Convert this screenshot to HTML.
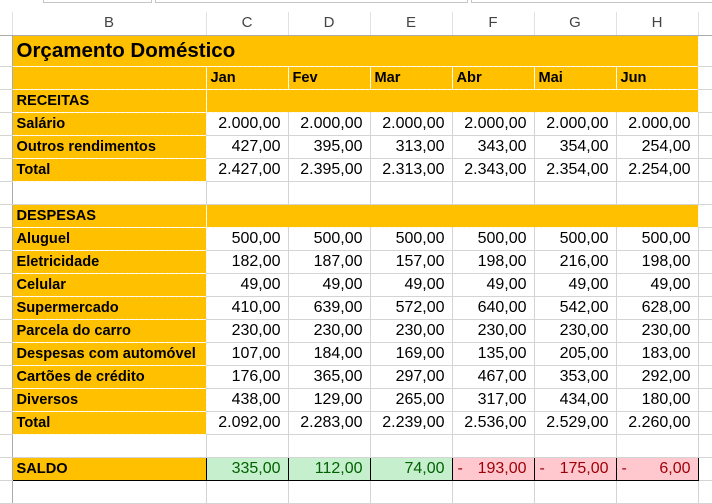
<!DOCTYPE html>
<html><head><meta charset="utf-8"><style>
*{margin:0;padding:0;box-sizing:border-box}
body{width:712px;height:500px;overflow:hidden;background:#fff;font-family:"Liberation Sans",sans-serif;position:relative}
.tab{position:absolute;top:-2px;height:5px;border:1px solid #c6c6c6;background:#fff}
table{position:absolute;left:0;top:12px;width:712px;border-collapse:collapse;table-layout:fixed}
td{height:23px;border-right:1px solid #d4d4d4;border-bottom:1px solid #d4d4d4;font-size:16px;color:#000;text-align:right;padding:0 7px 0 0;white-space:nowrap;overflow:hidden;line-height:22px}
tr.h td{background:#fff;color:#444;text-align:center;font-size:15px;border-bottom:1px solid #ababab;border-right:1px solid #e1e1e1;padding:0}
td.rh{padding:0;border-right:1px solid #ababab}
.o{background:#FFC000;border:1px dashed #fff8e0;text-align:left;font-weight:bold;font-size:14.6px;padding-left:4px}
.t td.o{font-size:20.5px}
.g{background:#C6EFCE;color:#006100;border:1px solid #000}
.r{background:#FFC7CE;color:#9C0006;border:1px solid #000}
.r span{float:left;padding-left:5px}
.sb{border:1.5px solid #000}
</style></head><body>
<div class="tab" style="left:43px;width:109px"></div>
<div class="tab" style="left:155px;width:313px"></div>
<div class="tab" style="left:471px;width:250px"></div>
<table>
<colgroup><col style="width:12px"><col style="width:194px"><col style="width:82px"><col style="width:82px"><col style="width:82px"><col style="width:82px"><col style="width:82px"><col style="width:82px"><col style="width:14px"></colgroup>
<tr class="h"><td class="rh"></td><td>B</td><td>C</td><td>D</td><td>E</td><td>F</td><td>G</td><td>H</td><td></td></tr>
<tr class="t"><td class="rh"></td><td class="o" colspan="7" style="height:31px;line-height:30px">Orçamento Doméstico</td><td></td></tr>
<tr><td class="rh"></td><td class="o"></td><td class="o">Jan</td><td class="o">Fev</td><td class="o">Mar</td><td class="o">Abr</td><td class="o">Mai</td><td class="o">Jun</td><td></td></tr>
<tr><td class="rh"></td><td class="o">RECEITAS</td><td class="o" colspan="6"></td><td></td></tr>
<tr><td class="rh"></td><td class="o">Salário</td><td>2.000,00</td><td>2.000,00</td><td>2.000,00</td><td>2.000,00</td><td>2.000,00</td><td>2.000,00</td><td></td></tr>
<tr><td class="rh"></td><td class="o">Outros rendimentos</td><td>427,00</td><td>395,00</td><td>313,00</td><td>343,00</td><td>354,00</td><td>254,00</td><td></td></tr>
<tr><td class="rh"></td><td class="o">Total</td><td>2.427,00</td><td>2.395,00</td><td>2.313,00</td><td>2.343,00</td><td>2.354,00</td><td>2.254,00</td><td></td></tr>
<tr><td class="rh"></td><td></td><td></td><td></td><td></td><td></td><td></td><td></td><td></td></tr>
<tr><td class="rh"></td><td class="o">DESPESAS</td><td class="o" colspan="6"></td><td></td></tr>
<tr><td class="rh"></td><td class="o">Aluguel</td><td>500,00</td><td>500,00</td><td>500,00</td><td>500,00</td><td>500,00</td><td>500,00</td><td></td></tr>
<tr><td class="rh"></td><td class="o">Eletricidade</td><td>182,00</td><td>187,00</td><td>157,00</td><td>198,00</td><td>216,00</td><td>198,00</td><td></td></tr>
<tr><td class="rh"></td><td class="o">Celular</td><td>49,00</td><td>49,00</td><td>49,00</td><td>49,00</td><td>49,00</td><td>49,00</td><td></td></tr>
<tr><td class="rh"></td><td class="o">Supermercado</td><td>410,00</td><td>639,00</td><td>572,00</td><td>640,00</td><td>542,00</td><td>628,00</td><td></td></tr>
<tr><td class="rh"></td><td class="o">Parcela do carro</td><td>230,00</td><td>230,00</td><td>230,00</td><td>230,00</td><td>230,00</td><td>230,00</td><td></td></tr>
<tr><td class="rh"></td><td class="o">Despesas com automóvel</td><td>107,00</td><td>184,00</td><td>169,00</td><td>135,00</td><td>205,00</td><td>183,00</td><td></td></tr>
<tr><td class="rh"></td><td class="o">Cartões de crédito</td><td>176,00</td><td>365,00</td><td>297,00</td><td>467,00</td><td>353,00</td><td>292,00</td><td></td></tr>
<tr><td class="rh"></td><td class="o">Diversos</td><td>438,00</td><td>129,00</td><td>265,00</td><td>317,00</td><td>434,00</td><td>180,00</td><td></td></tr>
<tr><td class="rh"></td><td class="o">Total</td><td>2.092,00</td><td>2.283,00</td><td>2.239,00</td><td>2.536,00</td><td>2.529,00</td><td>2.260,00</td><td></td></tr>
<tr><td class="rh"></td><td></td><td></td><td></td><td></td><td></td><td></td><td></td><td></td></tr>
<tr><td class="rh"></td><td class="o sb">SALDO</td><td class="g">335,00</td><td class="g">112,00</td><td class="g">74,00</td><td class="r"><span>-</span>193,00</td><td class="r"><span>-</span>175,00</td><td class="r"><span>-</span>6,00</td><td></td></tr>
<tr><td class="rh"></td><td></td><td></td><td></td><td></td><td></td><td></td><td></td><td></td></tr>
</table>
</body></html>
